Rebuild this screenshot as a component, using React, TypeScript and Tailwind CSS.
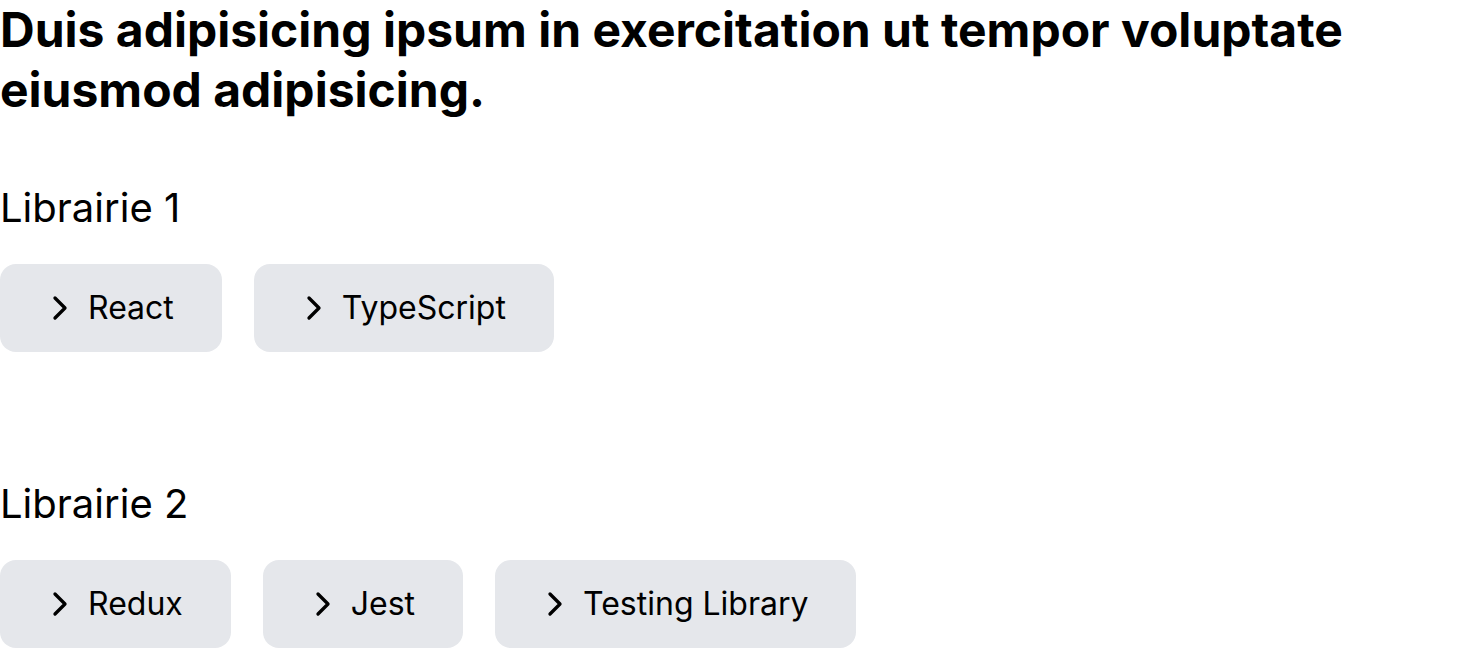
import { ChevronRight } from "lucide-react";

const sections = [
  { title: "Librairie 1", items: ["React", "TypeScript"] },
  { title: "Librairie 2", items: ["Redux", "Jest", "Testing Library"] },
];

function LibButton({ label }: { label: string }) {
  return (
    <button className="flex items-center gap-2 rounded-2xl bg-gray-200 py-6 pl-10 pr-12 text-[32px] leading-[40px] text-black">
      <ChevronRight size={40} strokeWidth={2} />
      <span>{label}</span>
    </button>
  );
}

export default function App() {
  return (
    <div className="flex flex-col font-['Inter',sans-serif] text-black">
      <h1 className="text-5xl font-bold leading-[60px]">
        Duis adipisicing ipsum in exercitation ut tempor voluptate eiusmod adipisicing.
      </h1>

      {sections.map((section) => (
        <section key={section.title} className="flex flex-col gap-8 py-16">
          <h2 className="text-[40px] font-normal leading-[48px]">{section.title}</h2>
          <div className="flex gap-8">
            {section.items.map((item) => (
              <LibButton key={item} label={item} />
            ))}
          </div>
        </section>
      ))}
    </div>
  );
}
